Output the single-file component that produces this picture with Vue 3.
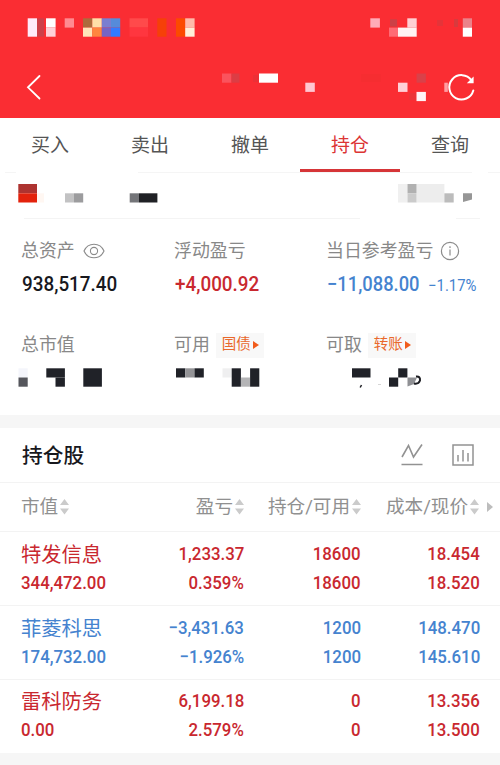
<template>
  <div class="page">
    <!-- Header -->
    <header class="header">
      <svg class="status" viewBox="0 0 500 56">
        <rect v-for="(t, i) in statusTiles" :key="i" :x="t[0]" :y="t[1]" :width="t[2]" :height="t[3]" :fill="t[4]" />
      </svg>
      <div class="nav">
        <svg class="back" viewBox="0 0 20 28">
          <path d="M14.5 3 L3 14.3 L14.5 25.5" />
        </svg>
        <svg class="nav-tiles" viewBox="46 56 400 62">
          <rect v-for="(t, i) in navTiles" :key="i" :x="t[0]" :y="t[1]" :width="t[2]" :height="t[3]" :fill="t[4]" />
        </svg>
        <svg class="refresh" viewBox="0 0 30 30">
          <path d="M25.5 8.3 A12.2 12.2 0 1 0 27.3 18.5" />
          <path class="tip" d="M27.6 4.5 V11.3 H20.8 Z" />
        </svg>
      </div>
    </header>

    <!-- Tabs -->
    <nav class="tabs">
      <span v-for="tab in tabs" :key="tab" class="tab" :class="{ active: tab === activeTab }">{{ tab }}</span>
    </nav>

    <!-- Account -->
    <svg class="account" viewBox="0 172 500 47">
      <rect v-for="(t, i) in accountTiles" :key="i" :x="t[0]" :y="t[1]" :width="t[2]" :height="t[3]" :fill="t[4]" />
      <path d="M463 193.3 H472 V199.5 L463 202 Z" fill="#969696" />
    </svg>

    <!-- Summary -->
    <section class="summary">
      <div class="cell">
        <div class="label">
          总资产
          <svg class="eye" viewBox="0 0 22 16">
            <path d="M1 8 C5 -1 17 -1 21 8 C17 17 5 17 1 8 Z" />
            <circle cx="11" cy="8" r="3.6" />
          </svg>
        </div>
        <div class="value"><span class="num">938,517.40</span></div>
      </div>
      <div class="cell">
        <div class="label">浮动盈亏</div>
        <div class="value up"><span class="num">+4,000.92</span></div>
      </div>
      <div class="cell">
        <div class="label">
          当日参考盈亏
          <svg class="info" viewBox="0 0 20 20">
            <circle cx="10" cy="10" r="8.6" />
            <path d="M10 8.5 V14.5 M10 5.3 V6.9" />
          </svg>
        </div>
        <div class="value down">
          <span class="num day">−11,088.00</span>
          <span class="num small">−1.17%</span>
        </div>
      </div>
    </section>

    <section class="summary second">
      <div class="cell"><div class="label">总市值</div></div>
      <div class="cell">
        <div class="label">可用<span class="tag">国债<i class="caret"></i></span></div>
      </div>
      <div class="cell">
        <div class="label">可取<span class="tag">转账<i class="caret"></i></span></div>
      </div>
    </section>
    <svg class="amounts" viewBox="0 362 500 53">
      <rect v-for="(t, i) in amountTiles" :key="i" :x="t[0]" :y="t[1]" :width="t[2]" :height="t[3]" :fill="t[4]" />
      <path d="M407.5 377.5 H417 L414 384 L407.5 386.5 Z" fill="#8f9094" />
      <path d="M416 376.5 Q420.5 376 420 380.5 Q418.5 384.5 414 383.5" fill="none" stroke="#1c1d22" stroke-width="2" />
      <path d="M361.5 385 L360.2 387.5" stroke="#1c1d22" stroke-width="1.5" />
      <path d="M378 384.5 h3" stroke="#ccc" stroke-width=".8" />
    </svg>

    <!-- Holdings -->
    <section class="holdings">
      <div class="title">
        <h2>持仓股</h2>
        <svg class="line-icon" viewBox="0 0 22 24">
          <path d="M1 14 L7.5 2.5 L12.5 14 L21 1.5 M.5 21.5 H21.5" />
        </svg>
        <svg class="bar-icon" viewBox="0 0 22 22">
          <path d="M1 1 H21 V21 H1 Z M6 11 V17.5 M11 6 V17.5 M16 9 V17.5" />
        </svg>
      </div>

      <div class="row head">
        <div v-for="col in columns" :key="col" class="col">
          {{ col }}
          <svg class="sort" viewBox="0 0 9 16">
            <path d="M4.5 0 L9 6 H0 Z M0 9.5 H9 L4.5 15.5 Z" />
          </svg>
        </div>
        <i class="more"></i>
      </div>

      <div v-for="stock in stocks" :key="stock.name" class="row stock" :class="stock.trend">
        <div class="col">
          <span class="name">{{ stock.name }}</span>
          <span class="num">{{ stock.value }}</span>
        </div>
        <div v-for="(pair, i) in stock.pairs" :key="i" class="col">
          <span class="num">{{ pair[0] }}</span>
          <span class="num">{{ pair[1] }}</span>
        </div>
      </div>
    </section>
  </div>
</template>

<script setup>
import { ref } from "vue";

const tabs = ["买入", "卖出", "撤单", "持仓", "查询"];
const activeTab = ref("持仓");

const columns = ["市值", "盈亏", "持仓/可用", "成本/现价"];

const stocks = ref([
  {
    name: "特发信息",
    value: "344,472.00",
    trend: "up",
    pairs: [["1,233.37", "0.359%"], ["18600", "18600"], ["18.454", "18.520"]],
  },
  {
    name: "菲菱科思",
    value: "174,732.00",
    trend: "down",
    pairs: [["−3,431.63", "−1.926%"], ["1200", "1200"], ["148.470", "145.610"]],
  },
  {
    name: "雷科防务",
    value: "0.00",
    trend: "up",
    pairs: [["6,199.18", "2.579%"], ["0", "0"], ["13.356", "13.500"]],
  },
]);

// Privacy mosaics: x, y, width, height, colour
const statusTiles = [
  [27.7, 18.3, 9.3, 18.4, "#ffeafa"],
  [37, 18.3, 7, 18.4, "#cd3f49"],
  [46, 18.3, 9.6, 9.3, "#ffffff"],
  [46, 27.6, 9.6, 9.1, "#ffd0d8"],
  [64.7, 18.3, 9.3, 9.3, "#ff8b91"],
  [83, 18.3, 9.3, 9.3, "#ac6b3c"],
  [92.3, 18.3, 9.5, 9.3, "#ffdfa9"],
  [83, 27.6, 9.3, 9.1, "#ffe4b9"],
  [92.3, 27.6, 9.5, 9.1, "#ff853f"],
  [101.8, 18.3, 9.2, 9.3, "#7a7ed0"],
  [111, 18.3, 9.2, 9.3, "#568bda"],
  [101.8, 27.6, 9.2, 9.1, "#7564c5"],
  [111, 27.6, 9.2, 9.1, "#347bff"],
  [129.5, 18.3, 18.5, 9.3, "#ff4a4b"],
  [129.5, 27.6, 18.5, 9.1, "#ff363f"],
  [157.3, 18.3, 9.2, 18.4, "#f64008"],
  [176, 18.3, 9.2, 18.4, "#fc4a00"],
  [185.2, 18.3, 9.4, 9.3, "#ffbaaa"],
  [185.2, 27.6, 9.4, 9.1, "#fff0d9"],
  [370.3, 18.3, 9.6, 9.3, "#ffabb8"],
  [390, 19.3, 7, 7.3, "#cc4147"],
  [389, 27.6, 9, 9.1, "#ff6b75"],
  [398, 27.6, 18.7, 9.1, "#fff3f3"],
  [407.3, 18.3, 9.4, 9.4, "#ffcfd3"],
  [437, 20, 6, 6, "#e53439"],
  [454, 19, 4, 8, "#d93a3d"],
  [462.8, 18.3, 9.2, 9.3, "#eb8289"],
  [462.8, 27.6, 9.2, 9.1, "#ffffff"],
];

const navTiles = [
  [222, 73.5, 9.5, 9.2, "#fa535d"],
  [231.5, 73.5, 8, 9.2, "#dc3d44"],
  [253, 75, 6, 7, "#ec3036"],
  [259, 73.5, 19, 9.2, "#ffffff"],
  [305.3, 82.7, 9.5, 9.2, "#ffc6d1"],
  [361, 74, 20, 8, "#f62d31"],
  [398, 82.7, 9.5, 9.2, "#ffd0d7"],
  [416.6, 73.5, 9.3, 9.2, "#d94149"],
  [409, 93, 7, 7, "#ec3338"],
  [416.5, 91.9, 9.4, 9.2, "#fff4f7"],
  [444.3, 82.7, 3.5, 9.2, "#ff9ea4"],
];

const accountTiles = [
  [5, 172, 11, 1, "#f5f5f5"],
  [138, 172, 334, 1, "#f5f5f5"],
  [488, 172, 12, 1, "#f5f5f5"],
  [18.3, 184, 18.7, 9.3, "#ad3330"],
  [18.3, 193.3, 18.7, 9.2, "#e3220c"],
  [37, 193.3, 7, 9.2, "#fff7f2"],
  [65, 193.3, 9, 9.2, "#c2c2c3"],
  [74, 193.3, 9.2, 9.2, "#9c9c9e"],
  [129.7, 193.3, 9.3, 9.2, "#747579"],
  [139, 193.3, 18.4, 9.2, "#202125"],
  [398, 184, 9.5, 18.5, "#f0f0f0"],
  [407.5, 184, 9.2, 9.3, "#b1b1b1"],
  [407.5, 193.3, 9.2, 9.2, "#cbcbcb"],
  [416.7, 184, 27.7, 18.5, "#ededed"],
  [444.4, 193.3, 9.3, 9.2, "#bcbcbc"],
  [24, 218, 336, 1, "#f4f4f4"],
  [456, 218, 24, 1, "#f4f4f4"],
];

const amountTiles = [
  [18.5, 368.3, 9.2, 9.2, "#f4f5fb"],
  [18.5, 377.5, 9.2, 9.2, "#55565c"],
  [46.3, 368.3, 18.6, 9.2, "#202228"],
  [55.5, 377.5, 9.4, 9.2, "#202228"],
  [83.3, 368.3, 18.6, 18.4, "#202228"],
  [176, 368.3, 9.3, 9.2, "#202228"],
  [185.3, 368.3, 9.2, 9.2, "#949497"],
  [194.5, 368.3, 9.3, 9.2, "#202228"],
  [222.5, 368.3, 9.2, 9.2, "#efeff0"],
  [231.7, 368.3, 9.2, 18.4, "#202228"],
  [240.9, 377.5, 9.2, 9.2, "#b4b4b6"],
  [250.1, 368.3, 9.2, 18.4, "#202228"],
  [352, 368.3, 18.5, 9.2, "#202228"],
  [398.2, 368.3, 9.2, 9.2, "#202228"],
  [389, 377.5, 9.2, 9.2, "#202228"],
];
</script>

<style>
body {
  background: #fff;
}
</style>

<style scoped>
.page {
  width: 500px;
  height: 765px;
  overflow: hidden;
  background: #fff;
  font-family: Roboto, "Noto Sans CJK SC", sans-serif;
  color: #17181d;
}

svg {
  display: block;
  flex: none;
  fill: none;
}

.header {
  height: 118px;
  background: #fa2d33;
}

.status {
  width: 500px;
  height: 56px;
}

.nav {
  display: flex;
  align-items: center;
  height: 62px;
}

.back {
  width: 20px;
  height: 28px;
  margin: 0 1px 0 25px;
  stroke: #fff;
  stroke-width: 1.8;
  stroke-linecap: round;
}

.nav-tiles {
  width: 400px;
  height: 62px;
  overflow: visible;
}

.refresh {
  width: 30px;
  height: 30px;
  stroke: #fff;
  stroke-width: 2;
  stroke-linecap: round;
}

.refresh .tip {
  fill: #fff;
  stroke: none;
}

.tabs {
  display: flex;
  height: 54px;
}

.tab {
  flex: 1;
  height: 51px;
  border-bottom: 3px solid transparent;
  text-align: center;
  font-size: 19px;
  line-height: 56px;
  color: #555;
}

.tab.active {
  color: #dc3535;
  border-bottom-color: #d63538;
}

.account {
  width: 500px;
  height: 47px;
}

.summary {
  display: grid;
  grid-template-columns: 153px 152px 1fr;
  height: 94px;
  padding: 18px 0 0 21px;
  box-sizing: border-box;
}

.summary.second {
  height: 49px;
}

.label {
  display: flex;
  align-items: center;
  height: 28px;
  font-size: 17.9px;
  line-height: 28px;
  white-space: nowrap;
  color: #888;
}

.eye {
  width: 22px;
  height: 16px;
  margin-left: 8px;
  stroke: #8b8b8b;
  stroke-width: 1.1;
}

.info {
  width: 20px;
  height: 20px;
  margin-left: 7px;
  margin-bottom: 1px;
  stroke: #8b8b8b;
  stroke-width: 1.2;
}

.value {
  display: flex;
  align-items: baseline;
  height: 28px;
  margin: 5px 0 0 1px;
  font-size: 20.5px;
  line-height: 28px;
}

.num {
  display: block;
  transform: scaleX(0.91);
  transform-origin: left;
  font-weight: 500;
  white-space: nowrap;
}

.value .num {
  transform: scaleX(0.92);
}

.value .day {
  transform: scaleX(0.895);
}

.value .small {
  margin-left: -2px;
  font-size: 16.2px;
  font-weight: 400;
}

.up {
  color: #c9282f;
}

.down {
  color: #4583cf;
}

.tag {
  display: flex;
  align-items: center;
  height: 25px;
  margin-left: 6px;
  padding: 0 5px 0 6px;
  background: #f8f8f8;
  font-size: 14.5px;
  color: #e9692c;
}

.caret {
  margin-left: 2px;
  border: solid transparent;
  border-width: 4.5px 0 4.5px 6px;
  border-left-color: #f15b1b;
}

.amounts {
  width: 500px;
  height: 53px;
}

.holdings {
  border: solid #f6f6f6;
  border-width: 13px 0 12px;
}

.title {
  display: flex;
  align-items: center;
  height: 54px;
  padding: 0 26px 0 22px;
  border-bottom: 1px solid #f3f3f3;
}

.title h2 {
  flex: 1;
  margin: -2px 0 0;
  font-size: 20.7px;
  font-weight: 500;
}

.line-icon {
  width: 22px;
  height: 24px;
  margin-right: 29px;
  stroke: #929292;
  stroke-width: 1.6;
}

.bar-icon {
  width: 22px;
  height: 22px;
  stroke: #929292;
  stroke-width: 1.5;
}

.row {
  display: grid;
  grid-template-columns: 110px 113px 117px 119px 13px;
  padding-left: 21px;
  border-bottom: 1px solid #f3f3f3;
}

.row .col {
  display: flex;
  justify-content: flex-end;
}

.row .col:first-child {
  justify-content: flex-start;
}

.head {
  align-items: center;
  height: 48px;
  font-size: 18.6px;
  line-height: 24px;
  color: #909090;
}

.head .col {
  align-items: center;
  height: 24px;
  white-space: nowrap;
}

.sort {
  width: 9px;
  height: 16px;
  margin: 0 0 1px 2px;
  fill: #cbcbcb;
}

.head .col:nth-child(4) {
  margin-right: 1px;
}

.more {
  justify-self: end;
  margin-top: -1px;
  border: solid transparent;
  border-width: 5px 0 5px 6px;
  border-left-color: #bdbdbd;
}

.stock {
  height: 65px;
  padding-top: 8px;
  font-size: 18.5px;
  line-height: 28.5px;
}

.stock .col {
  flex-direction: column;
  justify-content: flex-start;
  align-items: flex-end;
}

.stock .col:first-child {
  align-items: flex-start;
}

.stock .num {
  height: 28.5px;
  transform-origin: right;
}

.stock .col:first-child .num {
  transform-origin: left;
}

.name {
  height: 28.5px;
  padding-top: 1px;
  margin-bottom: -1px;
  font-size: 20.3px;
}

.stock:last-child {
  height: 65px;
  padding-top: 7px;
  padding-bottom: 1px;
  border-bottom: none;
}
</style>
